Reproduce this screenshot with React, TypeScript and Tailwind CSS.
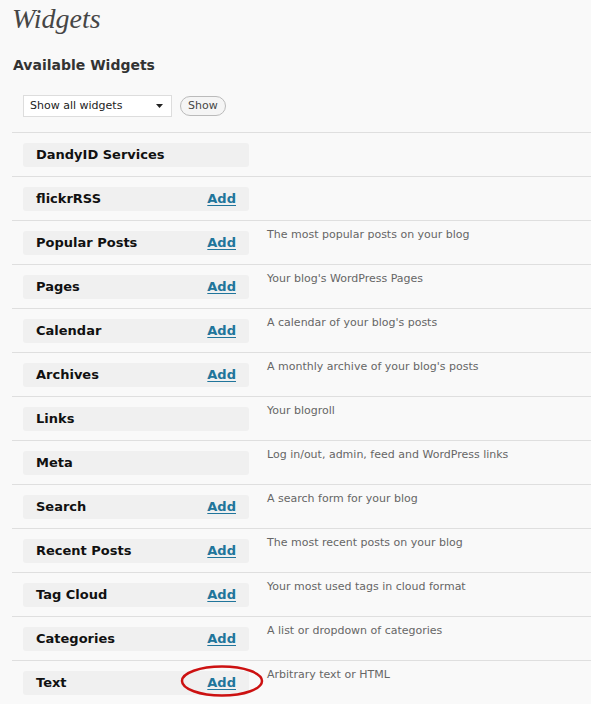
import React from "react";

const widgets: { name: string; add: boolean; desc: string }[] = [
  { name: "DandyID Services", add: false, desc: "" },
  { name: "flickrRSS", add: true, desc: "" },
  { name: "Popular Posts", add: true, desc: "The most popular posts on your blog" },
  { name: "Pages", add: true, desc: "Your blog's WordPress Pages" },
  { name: "Calendar", add: true, desc: "A calendar of your blog's posts" },
  { name: "Archives", add: true, desc: "A monthly archive of your blog's posts" },
  { name: "Links", add: false, desc: "Your blogroll" },
  { name: "Meta", add: false, desc: "Log in/out, admin, feed and WordPress links" },
  { name: "Search", add: true, desc: "A search form for your blog" },
  { name: "Recent Posts", add: true, desc: "The most recent posts on your blog" },
  { name: "Tag Cloud", add: true, desc: "Your most used tags in cloud format" },
  { name: "Categories", add: true, desc: "A list or dropdown of categories" },
  { name: "Text", add: true, desc: "Arbitrary text or HTML" },
];

export default function App() {
  return (
    <div
      className="w-[591px] h-[704px] overflow-hidden bg-[#f9f9f9] text-[#333]"
      style={{ fontFamily: "'DejaVu Sans', Verdana, sans-serif" }}
    >
      <h2
        className="pl-[12px] pt-[3px] text-[28px] leading-[32px] italic text-[#464646]"
        style={{ fontFamily: "'Liberation Serif', Georgia, serif", fontWeight: 400 }}
      >
        Widgets
      </h2>
      <h3 className="pl-[13px] mt-[21px] text-[14px] leading-[18px] font-bold text-[#333]">
        Available Widgets
      </h3>
      <div className="flex items-center gap-[8px] pl-[23px] mt-[21px] h-[22px]">
        <div className="flex items-center justify-between w-[149px] h-[22px] bg-white border border-[#ddd] pl-[6px] pr-[8px] text-[11px] text-[#222]">
          <span>Show all widgets</span>
          <svg width="7" height="4" viewBox="0 0 7 4">
            <path d="M0 0 L7 0 L3.5 4 Z" fill="#222" />
          </svg>
        </div>
        <div className="flex items-center h-[20px] px-[7px] rounded-full border border-[#bbb] bg-[#f5f5f5] text-[11px] text-[#464646]">
          Show
        </div>
      </div>
      <div className="ml-[12px] mt-[15px] border-t border-[#dfdfdf]">
        {widgets.map((w) => (
          <div key={w.name} className="flex h-[44px] border-b border-[#dfdfdf]">
            <div className="ml-[11px] mt-[10px] flex items-center justify-between w-[226px] h-[24px] rounded-[3px] bg-[#f0f0f0] pl-[13px] pr-[13px]">
              <span className="text-[13px] font-bold text-[#111]">{w.name}</span>
              {w.add && (
                <span className="relative text-[13px] font-bold text-[#21759b] underline underline-offset-2">
                  Add
                  {w.name === "Text" && (
                    <svg
                      className="absolute left-[-27px] top-[-9px] pointer-events-none"
                      width="84"
                      height="34"
                      viewBox="0 0 84 34"
                    >
                      <ellipse cx="42" cy="17" rx="40" ry="14.5" fill="none" stroke="#cc1111" strokeWidth="2.5" />
                    </svg>
                  )}
                </span>
              )}
            </div>
            <div className="ml-[18px] mt-[7px] text-[11px] leading-[14px] text-[#666]">{w.desc}</div>
          </div>
        ))}
      </div>
    </div>
  );
}
